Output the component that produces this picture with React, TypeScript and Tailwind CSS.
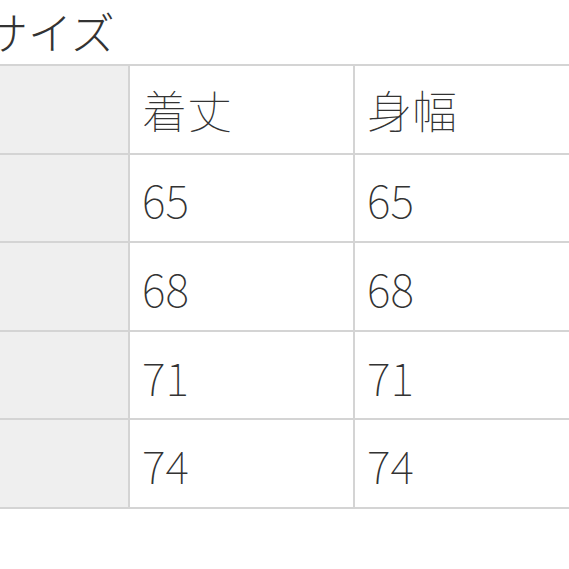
const rows = [
  ['65', '65'],
  ['68', '68'],
  ['71', '71'],
  ['74', '74'],
];

const font = { fontFamily: '"Noto Sans CJK JP", "Noto Sans", sans-serif' };

function Row({ a, b, first }: { a: string; b: string; first?: boolean }) {
  return (
    <div className="flex h-[88.6px] items-center border-b-2 border-[#d4d4d4]">
      <div className="h-full w-[230px] shrink-0 border-r-2 border-[#d4d4d4] bg-[#efefef]" />
      <div className="flex h-full w-[225px] shrink-0 items-center border-r-2 border-[#d4d4d4] pl-[12px]">
        <span className={first ? '' : 'pt-[2px]'}>{a}</span>
      </div>
      <div className="flex h-full flex-1 items-center pl-[12px]">
        <span className={first ? '' : 'pt-[2px]'}>{b}</span>
      </div>
    </div>
  );
}

export default function App() {
  return (
    <div className="h-[569px] w-[569px] overflow-hidden bg-white text-[#333] font-thin" style={font}>
      <h1 className="-ml-[16px] pt-[7px] text-[44px] leading-[48px] font-light">サイズ</h1>
      <div className="mt-[9px] -ml-[100px] w-[800px] border-t-2 border-[#d4d4d4] text-[45px] leading-none">
        <Row a="着丈" b="身幅" first />
        {rows.map(([a, b]) => (
          <Row key={a} a={a} b={b} />
        ))}
      </div>
    </div>
  );
}
